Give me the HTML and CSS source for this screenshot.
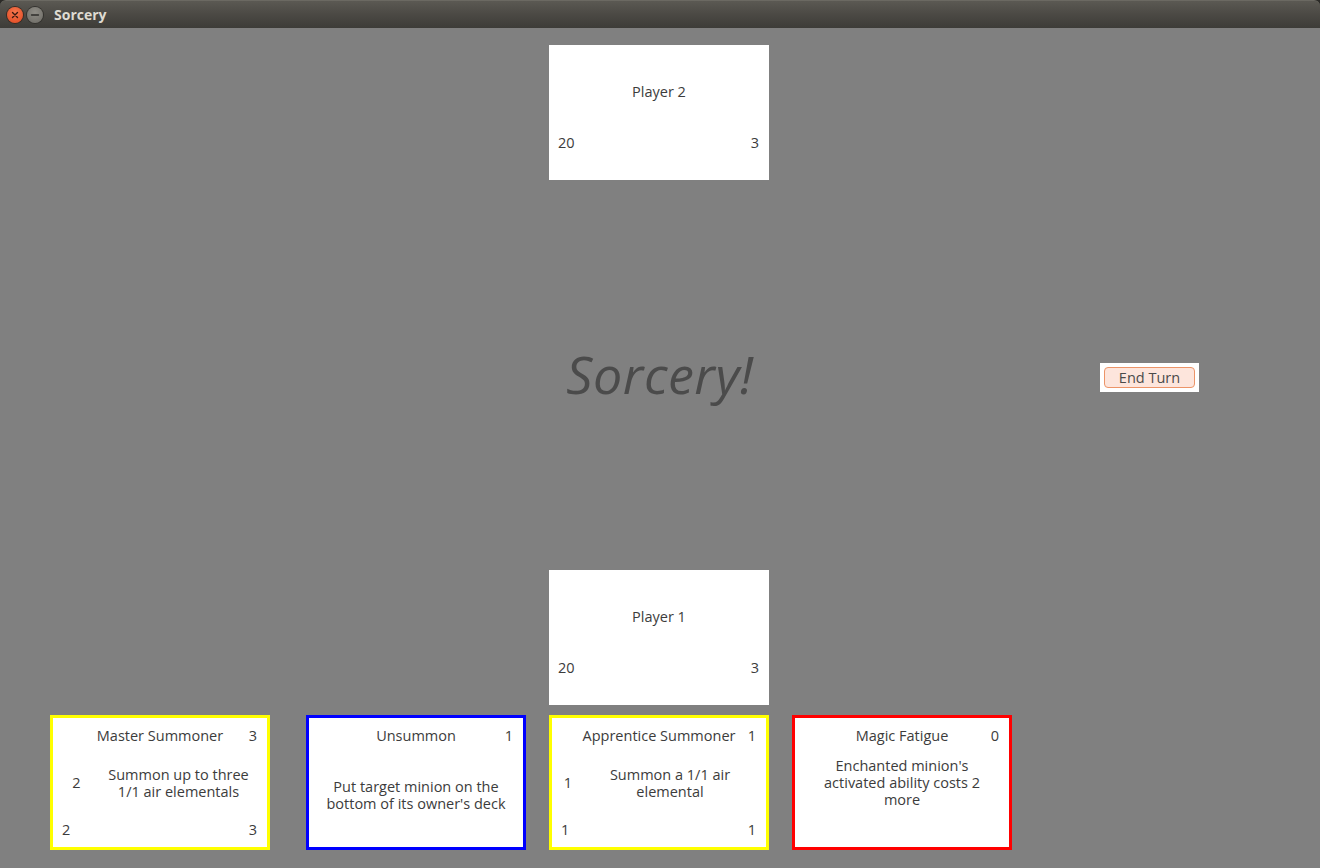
FILE: index.html
```html
<!DOCTYPE html>
<html lang="en">
<head>
<meta charset="utf-8">
<title>Sorcery</title>
<link rel="stylesheet" href="styles.css">
</head>
<body>
<div class="window">
  <header class="titlebar">
    <div class="wm-buttons">
      <span class="wm-btn wm-close">
        <svg width="16" height="16" viewBox="0 0 16 16"><path d="M5.5 5.5 L10.5 10.5 M10.5 5.5 L5.5 10.5" stroke="#3a1a10" stroke-width="1.4" stroke-linecap="round"/></svg>
      </span>
      <span class="wm-btn wm-min">
        <svg width="16" height="16" viewBox="0 0 16 16"><path d="M4.5 8 H11.5" stroke="#2e2d2a" stroke-width="1.4" stroke-linecap="round"/></svg>
      </span>
    </div>
    <span class="title">Sorcery</span>
  </header>

  <main class="board">
    <section class="player-row">
      <div class="player-card">
        <div class="player-name">Player 2</div>
        <div class="player-stats"><span>20</span><span>3</span></div>
      </div>
    </section>

    <section class="middle">
      <div class="middle-spacer"></div>
      <h1 class="logo">Sorcery!</h1>
      <div class="actions">
        <div class="end-turn-frame"><button class="end-turn">End Turn</button></div>
      </div>
    </section>

    <section class="player-row">
      <div class="player-card">
        <div class="player-name">Player 1</div>
        <div class="player-stats"><span>20</span><span>3</span></div>
      </div>
    </section>

    <section class="hand">
      <div class="card card-creature card-yellow card-first">
        <div class="card-top"><span class="card-name">Master Summoner</span><span class="card-cost">3</span></div>
        <div class="card-mid"><span class="card-stat stat-wide">2</span><p class="card-desc">Summon up to three<br>1/1 air elementals</p></div>
        <div class="card-bottom"><span>2</span><span>3</span></div>
      </div>
      <div class="card card-spell card-blue">
        <div class="card-top"><span class="card-name">Unsummon</span><span class="card-cost">1</span></div>
        <div class="card-body"><p class="card-desc">Put target minion on the<br>bottom of its owner's deck</p></div>
      </div>
      <div class="card card-creature card-yellow">
        <div class="card-top"><span class="card-name">Apprentice Summoner</span><span class="card-cost">1</span></div>
        <div class="card-mid"><span class="card-stat stat-narrow">1</span><p class="card-desc">Summon a 1/1 air<br>elemental</p></div>
        <div class="card-bottom"><span>1</span><span>1</span></div>
      </div>
      <div class="card card-creature card-red">
        <div class="card-top"><span class="card-name">Magic Fatigue</span><span class="card-cost">0</span></div>
        <div class="card-mid"><p class="card-desc">Enchanted minion's<br>activated ability costs 2<br>more</p></div>
        <div class="card-bottom"></div>
      </div>
    </section>
  </main>
</div>
</body>
</html>
```

FILE: styles.css
```css
* { box-sizing: border-box; }

html, body {
  margin: 0;
  padding: 0;
  background: #2b2a27;
}

body {
  font-family: "Open Sans", "Liberation Sans", sans-serif;
  font-size: 14.5px;
  color: #3c3c3c;
}

.window {
  width: 1320px;
  height: 868px;
  display: flex;
  flex-direction: column;
}

.titlebar {
  height: 28px;
  flex: 0 0 28px;
  display: flex;
  align-items: center;
  background: linear-gradient(#5b5953 0%, #4b4944 50%, #3d3c38 100%);
  border-top: 1px solid #6b6962;
  border-radius: 6px 6px 0 0;
  padding-left: 7px;
}

.wm-buttons {
  display: flex;
  gap: 4px;
}

.wm-btn {
  width: 16px;
  height: 16px;
  border-radius: 50%;
  display: flex;
  align-items: center;
  justify-content: center;
}

.wm-close {
  background: radial-gradient(circle at 50% 35%, #f7794f, #e0461f);
  box-shadow: 0 0 0 1px #3a2a22;
}

.wm-min {
  background: radial-gradient(circle at 50% 35%, #8f8d86, #6c6a64);
  box-shadow: 0 0 0 1px #33322e;
}

.title {
  margin-left: 11px;
  font-family: "Open Sans", "Liberation Sans", sans-serif;
  font-weight: 700;
  font-size: 14px;
  color: #dfdbd2;
}

.board {
  flex: 1;
  background: #808080;
  display: flex;
  flex-direction: column;
  padding: 17px 0 18px;
}

.player-row {
  display: flex;
  justify-content: center;
  padding-right: 2px;
}

.player-card {
  width: 220px;
  height: 135px;
  background: #ffffff;
  display: flex;
  flex-direction: column;
}

.player-name {
  height: 92px;
  display: flex;
  align-items: center;
  justify-content: center;
}

.player-stats {
  height: 10px;
  display: flex;
  align-items: center;
  justify-content: space-between;
  padding: 0 10px 0 9px;
}

.middle {
  flex: 1;
  display: grid;
  grid-template-columns: 1fr auto 1fr;
  align-items: center;
}

.logo {
  margin: 0;
  padding-bottom: 4px;
  font-family: "Open Sans", "Liberation Sans", sans-serif;
  font-style: italic;
  font-weight: 400;
  font-size: 52px;
  color: #4b4b4b;
  letter-spacing: 0.5px;
}

.actions {
  display: flex;
  justify-content: flex-end;
  padding-right: 121px;
  padding-top: 5px;
}

.end-turn-frame {
  width: 99px;
  height: 29px;
  background: #ffffff;
  padding: 4px;
  display: flex;
}

.end-turn {
  flex: 1;
  margin: 0;
  padding: 0;
  border: 1px solid #ec9468;
  border-radius: 4px;
  background: #fde5dc;
  font-family: "Open Sans", "Liberation Sans", sans-serif;
  font-size: 14.5px;
  color: #4a4a4a;
}

.hand {
  margin-top: 10px;
  display: flex;
  gap: 23px;
  padding-left: 50px;
}

.card {
  width: 220px;
  height: 135px;
  background: #ffffff;
  border: 3px solid #000;
  display: grid;
}

.card-first { margin-right: 13px; }

.card-yellow { border-color: #ffff00; }
.card-blue { border-color: #0000ff; }
.card-red { border-color: #ff0000; }

.card-creature { grid-template-rows: 35px 59px 35px; }
.card-spell { grid-template-rows: 35px 94px; }

.card-top {
  display: grid;
  grid-template-columns: 1fr auto 1fr;
  align-items: center;
}

.card-name { grid-column: 2; white-space: nowrap; }

.card-cost {
  grid-column: 3;
  justify-self: end;
  padding-right: 10px;
}

.card-mid {
  display: flex;
  align-items: center;
}

.card-stat {
  margin-left: 10px;
  text-align: center;
  flex: 0 0 auto;
}

.stat-wide { width: 27px; }
.stat-narrow { width: 12px; }

.card-desc {
  flex: 1;
  margin: 0;
  text-align: center;
  line-height: 17px;
}

.card-body {
  display: flex;
  align-items: center;
  padding-bottom: 11px;
}

.card-bottom {
  display: flex;
  align-items: center;
  justify-content: space-between;
  padding: 0 10px 0 9px;
}
```
